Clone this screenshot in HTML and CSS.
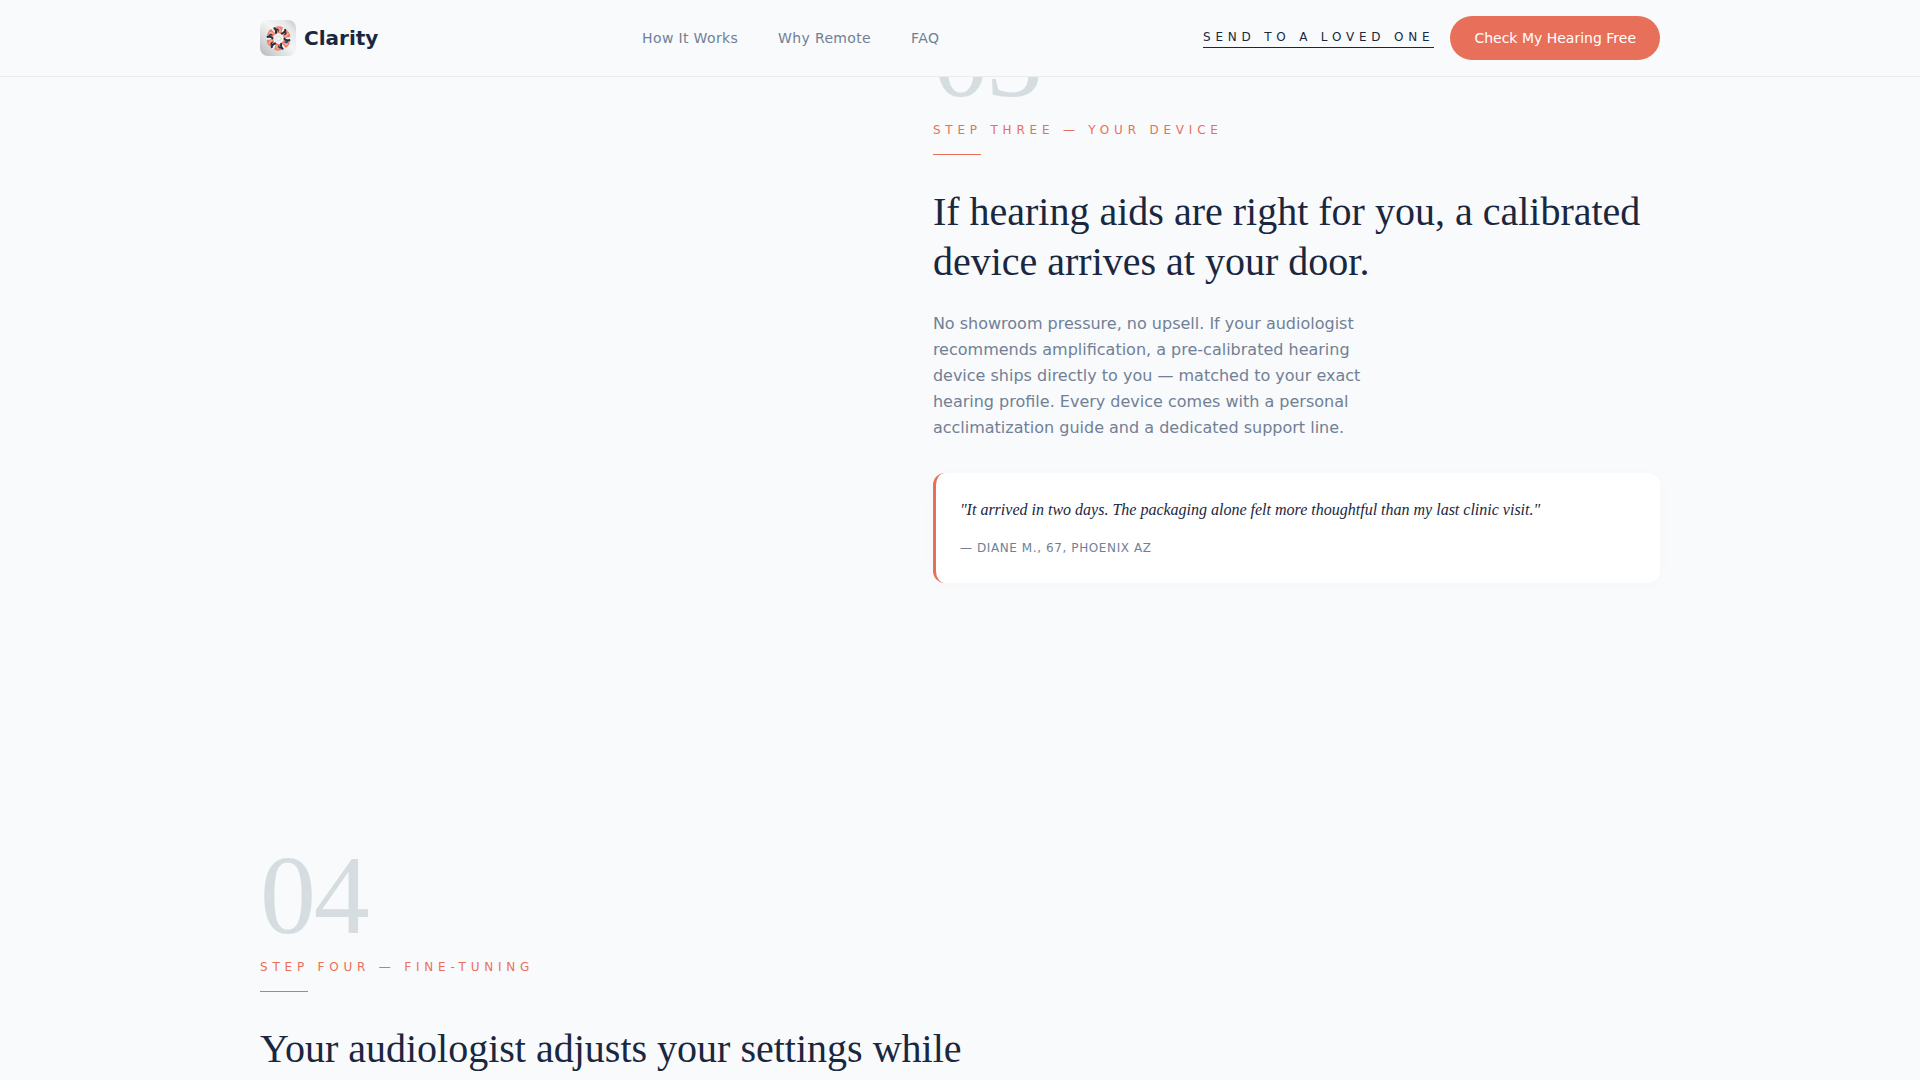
FILE: index.html
```html
<!DOCTYPE html>
<html lang="en">
<head>
  <meta charset="UTF-8">
  <meta name="viewport" content="width=device-width, initial-scale=1.0">
  <title>Clarity</title>
  <link rel="stylesheet" href="styles.css">
</head>
<body>
  <header class="site-header">
    <div class="container nav">
      <a class="brand" href="#">
        <svg class="brand-icon" viewBox="0 0 36 36" aria-hidden="true">
          <defs>
            <linearGradient id="tile" x1="0" y1="1" x2="1" y2="0">
              <stop offset="0" stop-color="#b4b7b9"/>
              <stop offset="0.3" stop-color="#d9dbdc"/>
              <stop offset="0.55" stop-color="#f4f5f5"/>
              <stop offset="0.8" stop-color="#e6e8e9"/>
              <stop offset="1" stop-color="#c3c6c7"/>
            </linearGradient>
            <g id="blade">
              <path d="M14 8.200C17 5.800 20.500 5.900 23 7.500L20.800 14C19 12.800 17.500 12.800 15.800 13.600Z" fill="#e8836b"/>
              <path d="M13.600 8C15.600 8.600 16.600 10.500 15.600 14" fill="none" stroke="#22304a" stroke-width="2"/>
              <path d="M16 9.500C17.500 8.800 18.500 9.600 18.200 11.500" fill="none" stroke="#22304a" stroke-width="1.200"/>
              <path d="M18.500 7.800C20.200 8.600 20.600 10 19.800 12" fill="none" stroke="#f8ded6" stroke-width="0.700"/>
            </g>
          </defs>
          <rect width="36" height="36" rx="8" fill="url(#tile)"/>
          <circle cx="18.500" cy="18.500" r="11.500" fill="#f3f3f3"/>
          <use href="#blade"/>
          <use href="#blade" transform="rotate(60 18.500 18.500)"/>
          <use href="#blade" transform="rotate(120 18.500 18.500)"/>
          <use href="#blade" transform="rotate(180 18.500 18.500)"/>
          <use href="#blade" transform="rotate(240 18.500 18.500)"/>
          <use href="#blade" transform="rotate(300 18.500 18.500)"/>
          <circle cx="18.500" cy="18.500" r="4.500" fill="#f1f2f3"/>
          <circle cx="18.500" cy="18.500" r="2.500" fill="none" stroke="#d5d8da" stroke-width="0.800"/>
        </svg>
        <span>Clarity</span>
      </a>
      <nav class="nav-links">
        <a href="#how">How It Works</a>
        <a href="#why">Why Remote</a>
        <a href="#faq">FAQ</a>
      </nav>
      <div class="nav-actions">
        <a class="send-link" href="#send">Send to a loved one</a>
        <button class="btn-primary" type="button">Check My Hearing Free</button>
      </div>
    </div>
  </header>

  <main class="container steps" id="how">
    <section class="step step-right">
      <div class="step-body">
        <div class="step-number">03</div>
        <p class="step-label">Step Three — Your Device</p>
        <h2>If hearing aids are right for you, a calibrated device arrives at your door.</h2>
        <p class="step-text">No showroom pressure, no upsell. If your audiologist recommends amplification, a pre-calibrated hearing device ships directly to you — matched to your exact hearing profile. Every device comes with a personal acclimatization guide and a dedicated support line.</p>
        <blockquote class="quote">
          <p>"It arrived in two days. The packaging alone felt more thoughtful than my last clinic visit."</p>
          <cite>— Diane M., 67, Phoenix AZ</cite>
        </blockquote>
      </div>
    </section>

    <section class="step step-left">
      <div class="step-body">
        <div class="step-number">04</div>
        <p class="step-label">Step Four — Fine-Tuning</p>
        <h2>Your audiologist adjusts your settings while</h2>
      </div>
    </section>
  </main>
</body>
</html>
```

FILE: styles.css
```css
* {
  box-sizing: border-box;
  margin: 0;
  padding: 0;
}

body {
  font-family: "DejaVu Sans", sans-serif;
  background: #f8fafb;
  color: #1a2740;
}

a {
  color: inherit;
  text-decoration: none;
}

.container {
  max-width: 1400px;
  margin: 0 auto;
}

/* Header */
.site-header {
  position: fixed;
  top: 0;
  left: 0;
  right: 0;
  z-index: 10;
  background: #f8fafb;
  border-bottom: 1px solid #e8edef;
}

.nav {
  display: flex;
  align-items: center;
  justify-content: space-between;
  padding: 16px 0;
}

.brand {
  display: flex;
  align-items: center;
  gap: 8px;
  font-size: 20px;
  font-weight: bold;
}

.brand-icon {
  width: 36px;
  height: 36px;
}

.nav-links {
  display: flex;
  gap: 40px;
  font-size: 14px;
  letter-spacing: 0.025em;
  color: #718096;
}

.nav-actions {
  display: flex;
  align-items: center;
  gap: 16px;
}

.send-link {
  padding-bottom: 2px;
  font-size: 12px;
  line-height: 16px;
  letter-spacing: 0.4em;
  text-transform: uppercase;
  border-bottom: 1px solid #1a2740;
}

.btn-primary {
  height: 44px;
  padding: 0 24px;
  border: none;
  border-radius: 22px;
  background: #e8705a;
  color: #fff;
  font-family: inherit;
  font-size: 14px;
  cursor: pointer;
}

/* Steps */
.steps {
  display: flex;
  flex-direction: column;
  gap: 256px;
  padding-top: 2px;
}

.step {
  display: grid;
  gap: 78px;
}

.step-right {
  grid-template-columns: 9fr 11fr;
}

.step-right .step-body {
  grid-column: 2;
}

.step-left {
  grid-template-columns: 11fr 9fr;
}

.step-number {
  font-family: "Liberation Serif", serif;
  font-size: 112px;
  line-height: 1;
  letter-spacing: -0.02em;
  color: #d6dde1;
}

.step-label {
  margin-top: 6px;
  font-size: 12px;
  line-height: 20px;
  letter-spacing: 0.4em;
  text-transform: uppercase;
  color: #e8705a;
}

.step-label::after {
  content: "";
  display: block;
  width: 48px;
  height: 1px;
  margin-top: 14px;
  background: #e8705a;
}

h2 {
  margin-top: 32px;
  font-family: "Liberation Serif", serif;
  font-size: 40px;
  font-weight: normal;
  line-height: 50px;
}

.step-text {
  max-width: 448px;
  margin-top: 24px;
  font-size: 16px;
  line-height: 26px;
  color: #718096;
}

.quote {
  margin-top: 32px;
  padding: 24px;
  background: #fff;
  border-left: 3px solid #e8705a;
  border-radius: 12px;
  box-shadow: 0 2px 16px rgba(26, 39, 64, 0.02);
}

.quote p {
  margin-bottom: 14px;
  font-family: "Liberation Serif", serif;
  font-size: 16px;
  font-style: italic;
  line-height: 26px;
}

.quote cite {
  display: block;
  font-size: 12px;
  font-style: normal;
  line-height: 22px;
  letter-spacing: 0.05em;
  text-transform: uppercase;
  color: #718096;
}
```
